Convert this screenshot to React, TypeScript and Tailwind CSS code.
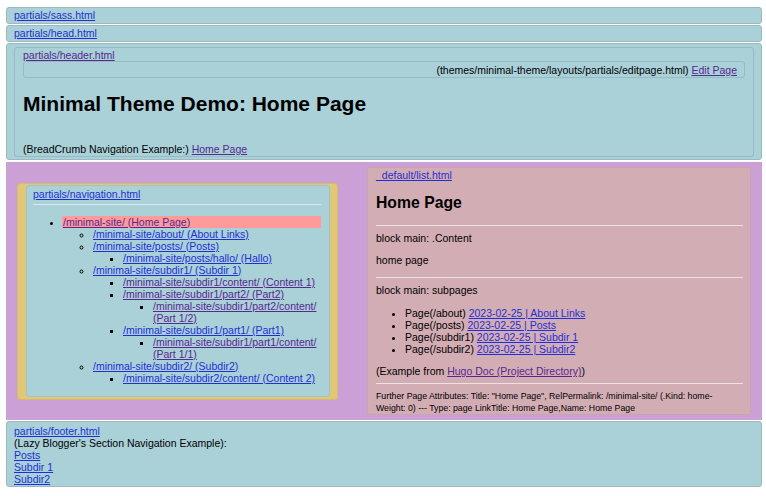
const BLUE = "text-[#1f2fd6] underline";
const PURPLE = "text-[#57288f] underline";

type NavItem = { href: string; label: string; visited?: boolean; children?: NavItem[] };

const NAV: NavItem = {
  href: "/minimal-site/",
  label: "/minimal-site/ (Home Page)",
  visited: true,
  children: [
    { href: "/minimal-site/about/", label: "/minimal-site/about/ (About Links)" },
    {
      href: "/minimal-site/posts/",
      label: "/minimal-site/posts/ (Posts)",
      children: [{ href: "/minimal-site/posts/hallo/", label: "/minimal-site/posts/hallo/ (Hallo)" }],
    },
    {
      href: "/minimal-site/subdir1/",
      label: "/minimal-site/subdir1/ (Subdir 1)",
      children: [
        { href: "#", label: "/minimal-site/subdir1/content/ (Content 1)", visited: true },
        {
          href: "#",
          label: "/minimal-site/subdir1/part2/ (Part2)",
          visited: true,
          children: [{ href: "#", label: "/minimal-site/subdir1/part2/content/ (Part 1/2)", visited: true }],
        },
        {
          href: "#",
          label: "/minimal-site/subdir1/part1/ (Part1)",
          children: [{ href: "#", label: "/minimal-site/subdir1/part1/content/ (Part 1/1)", visited: true }],
        },
      ],
    },
    {
      href: "/minimal-site/subdir2/",
      label: "/minimal-site/subdir2/ (Subdir2)",
      children: [{ href: "#", label: "/minimal-site/subdir2/content/ (Content 2)" }],
    },
  ],
};

const SUBPAGES = [
  { page: "/about", title: "About Links" },
  { page: "/posts", title: "Posts" },
  { page: "/subdir1", title: "Subdir 1" },
  { page: "/subdir2", title: "Subdir2" },
];

function NavList({ items, depth }: { items: NavItem[]; depth: number }) {
  const style = depth === 0 ? "list-disc" : depth === 1 ? "list-[circle]" : "list-[square]";
  return (
    <ul className={`${style} pl-[30px]`}>
      {items.map((item) => (
        <li key={item.label}>
          <div className={depth === 0 ? "bg-[#ff9a9a] -ml-px pl-px" : ""}>
            <a href={item.href} className={item.visited ? PURPLE : BLUE}>
              {item.label}
            </a>
          </div>
          {item.children && <NavList items={item.children} depth={depth + 1} />}
        </li>
      ))}
    </ul>
  );
}

export default function App() {
  return (
    <div className="min-h-[496px] bg-white pl-[6px] pr-[4px] pt-[7px] font-['Liberation_Sans',Arial,sans-serif] text-[10.5px] leading-[12px] text-black">
      <div className="h-[17px] rounded-[3px] border border-[#9cb9be] bg-[#aad0d8] px-[7px] pt-px">
        <a href="#" className={BLUE}>partials/sass.html</a>
      </div>
      <div className="mt-px h-[17px] rounded-[3px] border border-[#9cb9be] bg-[#aad0d8] px-[7px] pt-px">
        <a href="#" className={BLUE}>partials/head.html</a>
      </div>

      <div className="mt-px h-[117px] rounded-[3px] border border-[#9cb9be] bg-[#aad0d8] px-[7px] pt-[3px] pb-[2px]">
        <div className="flex h-[110px] flex-col rounded-[3px] border border-[#96bcc3] px-[8px] pt-px">
          <div>
            <a href="#" className={PURPLE}>partials/header.html</a>
          </div>
          <div className="flex h-[17px] items-center justify-end rounded-[3px] border border-[#96bcc3] pr-[7px]">
            <span>(themes/minimal-theme/layouts/partials/editpage.html)&nbsp;</span>
            <a href="#" className={PURPLE}>Edit Page</a>
          </div>
          <h1 className="mt-[14px] text-[21px] font-bold leading-[24px]">Minimal Theme Demo: Home Page</h1>
          <p className="mt-[27px]">
            (BreadCrumb Navigation Example:) <a href="#" className={PURPLE}>Home Page</a>
          </p>
        </div>
      </div>

      <div className="mt-[2px] flex h-[258px] items-center gap-[29px] bg-[#cba0d6] px-[11px]">
        <div className="flex h-[217px] w-[321px] shrink-0 flex-col rounded-[3px] border border-[#d6bb6c] bg-[#e0c878] pl-[8px] pr-[7px] pt-px pb-[2px]">
          <div className="flex flex-1 flex-col rounded-[3px] border border-[#9fc3c9] bg-[#aad0d8] pl-[6px] pr-[8px] pt-[2px]">
            <div>
              <a href="#" className={BLUE}>partials/navigation.html</a>
            </div>
            <div className="mt-[4px] h-px bg-[#d9e9ec]" />
            <div className="mt-[11px]">
              <NavList items={[NAV]} depth={0} />
            </div>
          </div>
        </div>

        <div className="my-[5px] flex flex-1 flex-col self-stretch rounded-[2px] border border-[#c9a4ac] bg-[#d3adb4] pl-[8px] pr-[7px] pt-px">
          <div>
            <a href="#" className={BLUE}>_default/list.html</a>
          </div>
          <h2 className="mt-[13px] text-[15.75px] font-bold leading-[18px]">Home Page</h2>
          <div className="mt-[13px] h-px bg-[#ece2e4]" />
          <p className="mt-[6px]">block main: .Content</p>
          <p className="mt-[10px]">home page</p>
          <div className="mt-[11px] h-px bg-[#ece2e4]" />
          <p className="mt-[6px]">block main: subpages</p>
          <ul className="mt-[11px] list-disc pl-[29px]">
            {SUBPAGES.map((s) => (
              <li key={s.page}>
                Page({s.page}) <a href="#" className={BLUE}>2023-02-25 | {s.title}</a>
              </li>
            ))}
          </ul>
          <p className="mt-[10px]">
            (Example from <a href="#" className={PURPLE}>Hugo Doc (Project Directory)</a>)
          </p>
          <div className="mt-[6px] h-px bg-[#ece2e4]" />
          <p className="mt-[6px] text-[8.75px] leading-[12px]">
            Further Page Attributes: Title: "Home Page", RelPermalink: /minimal-site/ (.Kind: home-
            <br />
            Weight: 0) --- Type: page LinkTitle: Home Page,Name: Home Page
          </p>
        </div>
      </div>

      <div className="mt-px flex h-[66px] flex-col rounded-[3px] border border-[#9cb9be] bg-[#aad0d8] px-[7px] pt-[3px]">
        <div>
          <a href="#" className={BLUE}>partials/footer.html</a>
        </div>
        <div>(Lazy Blogger's Section Navigation Example):</div>
        <a href="#" className={`${BLUE} self-start`}>Posts</a>
        <a href="#" className={`${BLUE} self-start`}>Subdir 1</a>
        <a href="#" className={`${BLUE} self-start`}>Subdir2</a>
      </div>
    </div>
  );
}
